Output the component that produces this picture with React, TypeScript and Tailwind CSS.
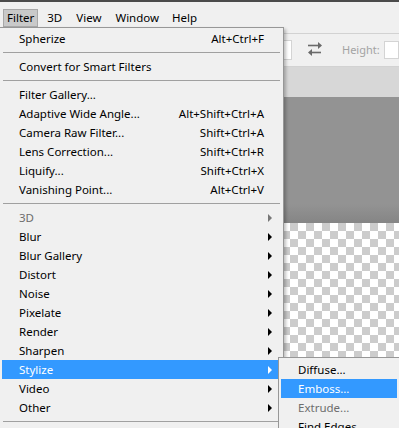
import React from "react"

const font = { fontFamily: '"Noto Sans", "Liberation Sans", sans-serif' }

type Item =
  | { sep: true }
  | { label: string; shortcut?: string; sub?: boolean; disabled?: boolean; active?: boolean }

const filterItems: Item[] = [
  { label: "Spherize", shortcut: "Alt+Ctrl+F" },
  { sep: true },
  { label: "Convert for Smart Filters" },
  { sep: true },
  { label: "Filter Gallery..." },
  { label: "Adaptive Wide Angle...", shortcut: "Alt+Shift+Ctrl+A" },
  { label: "Camera Raw Filter...", shortcut: "Shift+Ctrl+A" },
  { label: "Lens Correction...", shortcut: "Shift+Ctrl+R" },
  { label: "Liquify...", shortcut: "Shift+Ctrl+X" },
  { label: "Vanishing Point...", shortcut: "Alt+Ctrl+V" },
  { sep: true },
  { label: "3D", sub: true, disabled: true },
  { label: "Blur", sub: true },
  { label: "Blur Gallery", sub: true },
  { label: "Distort", sub: true },
  { label: "Noise", sub: true },
  { label: "Pixelate", sub: true },
  { label: "Render", sub: true },
  { label: "Sharpen", sub: true },
  { label: "Stylize", sub: true, active: true },
  { label: "Video", sub: true },
  { label: "Other", sub: true },
  { sep: true },
]

const stylizeItems: Item[] = [
  { label: "Diffuse..." },
  { label: "Emboss...", active: true },
  { label: "Extrude...", disabled: true },
  { label: "Find Edges" },
]

const Arrow = ({ color }: { color: string }) => (
  <svg width="5" height="8" viewBox="0 0 5 8" className="absolute right-[8px] top-[6px]">
    <path d="M0 0 L4 4 L0 8 Z" fill={color} />
  </svg>
)

const MenuRows = ({ items }: { items: Item[] }) => (
  <>
    {items.map((it, i) =>
      "sep" in it ? (
        <div key={i} className="h-[9px] px-[3px] pt-[4px]">
          <div className="h-px bg-[#a0a0a0]" />
        </div>
      ) : (
        <div
          key={i}
          className={`relative mx-[2px] flex h-[19px] items-center pl-[17px] pr-[17px] text-[11.5px] ${
            it.active ? "bg-[#3399ff] text-white" : it.disabled ? "text-[#6d6d6d]" : "text-black"
          }`}
        >
          <span className="flex-1 whitespace-nowrap">{it.label}</span>
          {it.shortcut && <span className="whitespace-nowrap">{it.shortcut}</span>}
          {it.sub && <Arrow color={it.active ? "#ffffff" : it.disabled ? "#777777" : "#000000"} />}
        </div>
      )
    )}
  </>
)

const SwapIcon = () => (
  <svg width="16" height="14" viewBox="0 0 16 14">
    <path d="M1 3.5 H12" stroke="#6a6a6a" strokeWidth="1.6" />
    <path d="M11 0 L15 3.5 L11 7 Z" fill="#6a6a6a" />
    <path d="M4 10.5 H14" stroke="#6a6a6a" strokeWidth="1.6" />
    <path d="M5 7 L1 10.5 L5 14 Z" fill="#6a6a6a" />
  </svg>
)

export default function App() {
  return (
    <div className="relative h-[428px] w-[399px] overflow-hidden bg-[#f0f0f0]" style={font}>
      {/* workspace behind the menu */}
      <div className="flex h-full flex-col">
        <div className="h-[2px] bg-[#4b4b4b]" />
        <div className="flex h-[31px] items-start bg-[#f0f0f0] pl-[3px] pt-[7px] text-[11.5px] text-black">
          <div className="flex h-[18px] items-center border border-[#a8a8a8] bg-[#c9c9c9] px-[3px]">Filter</div>
          <div className="ml-[9px] flex h-[18px] items-center">3D</div>
          <div className="ml-[14px] flex h-[18px] items-center">View</div>
          <div className="ml-[14px] flex h-[18px] items-center">Window</div>
          <div className="ml-[13px] flex h-[18px] items-center">Help</div>
        </div>
        <div className="flex h-[34px] items-center border-t border-b border-[#d2d2d2] bg-[#f0f0f0]">
          <div className="ml-[220px] h-[20px] w-[72px] border border-[#d4d4d4] bg-white" />
          <div className="ml-[15px] mt-[-2px] flex items-center">
            <SwapIcon />
          </div>
          <span className="ml-[19px] text-[11px] text-[#a3a3a3]">Height:</span>
          <div className="ml-[4px] h-[18px] flex-1 border border-[#d4d4d4] bg-white" />
        </div>
        <div className="h-[30px] bg-[#d7d7d7]" />
        <div className="h-[126px] bg-gradient-to-b from-[#939393] from-85% to-[#858585]" />
        <div className="flex-1 bg-[conic-gradient(#cccccc_25%,#ffffff_0_50%,#cccccc_0_75%,#ffffff_0)] bg-[length:16px_16px] bg-[position:10px_0px]" />
      </div>

      {/* Filter menu */}
      <div className="absolute left-0 top-[27px] h-[420px] w-[284px] border-t border-r border-[#979797] bg-[#f0f0f0] pt-[1px] shadow-[2px_2px_3px_rgba(0,0,0,0.25)]">
        <MenuRows items={filterItems} />
      </div>

      {/* Stylize submenu */}
      <div className="absolute left-[278px] top-[357px] h-[100px] w-[122px] border border-[#979797] bg-[#f0f0f0] pt-[2px]">
        <MenuRows items={stylizeItems} />
      </div>
    </div>
  )
}
